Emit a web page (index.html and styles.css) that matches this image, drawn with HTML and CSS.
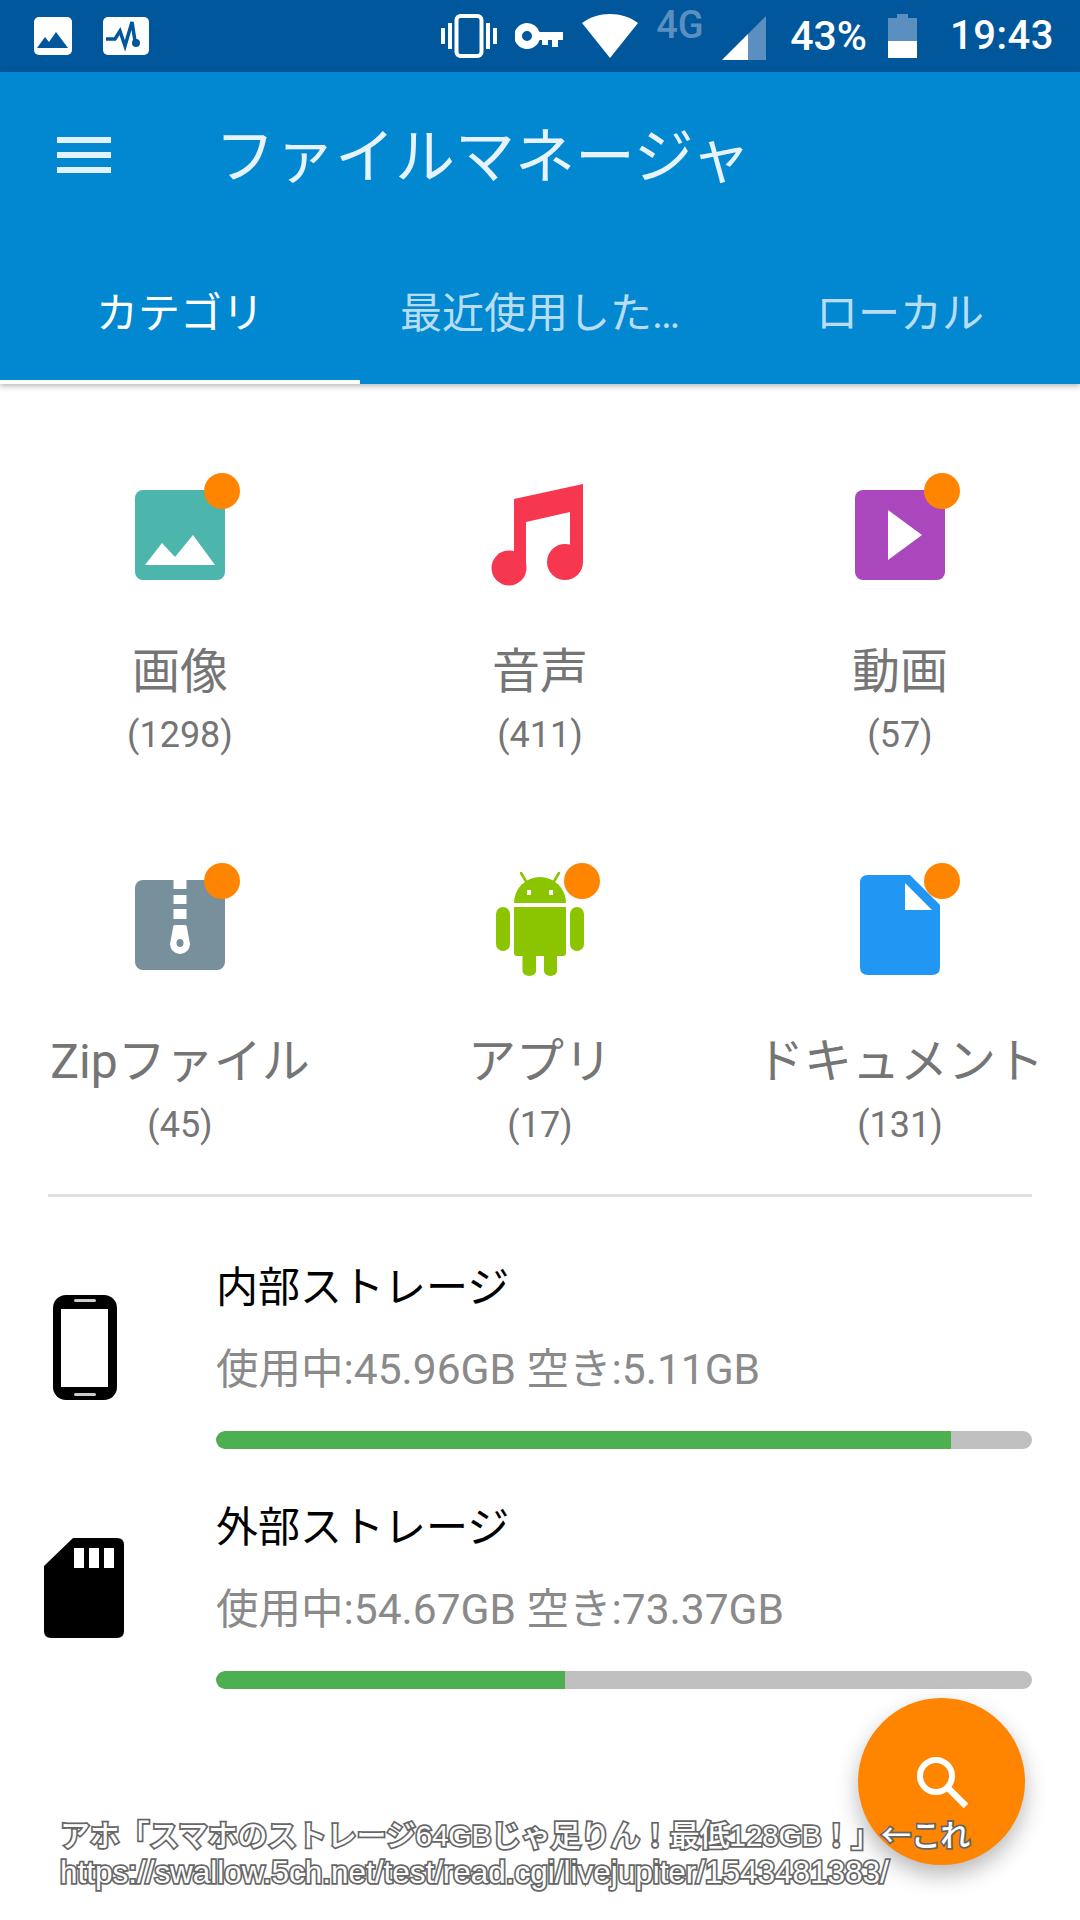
FILE: index.html
```html
<!DOCTYPE html>
<html lang="ja">
<head>
<meta charset="utf-8">
<title>ファイルマネージャ</title>
<link rel="stylesheet" href="styles.css">
</head>
<body>
<div class="phone">
  <div class="status">
    <svg class="st-a" width="38" height="38" viewBox="0 0 38 38"><rect width="38" height="38" rx="5" fill="#fff"/><path d="M3 31L11 20L15 25L22 15L34 31Z" fill="#01579b"/></svg>
    <svg class="st-b" width="46" height="38" viewBox="0 0 46 38"><rect width="46" height="38" rx="5" fill="#fff"/><path d="M3 22H12L17 14L22 29L29 5L32 24" fill="none" stroke="#01579b" stroke-width="3.5"/><circle cx="33" cy="26" r="4" fill="#01579b"/></svg>
    <span class="st-spacer"></span>
    <svg class="st-icon" width="56" height="44" viewBox="0 0 56 44"><rect x="15.5" y="2" width="25" height="40" rx="4" fill="none" stroke="#fff" stroke-width="4"/><path d="M0 14H4V30H0ZM7 9H11V35H7ZM45 9H49V35H45ZM52 14H56V30H52Z" fill="#fff"/></svg>
    <svg class="st-key" width="48" height="26" viewBox="0 0 48 26"><path d="M12 0a13 13 0 0 1 12.500 9H48V17H43V24H37V17H33V22H27V17H24.500A13 13 0 1 1 12 0ZM12 8a5 5 0 1 0 0 10a5 5 0 0 0 0-10Z" fill="#fff" fill-rule="evenodd"/></svg>
    <svg class="st-wifi" width="56" height="44" viewBox="0 0 56 44"><path d="M28 44L0 9C16-3 40-3 56 9Z" fill="#fff"/></svg>
    <span class="st-4g">4G</span>
    <svg class="st-signal" width="44" height="44" viewBox="0 0 44 44"><path d="M0 44L44 0V44Z" fill="#5b8fc0"/><path d="M0 44L26 18V44Z" fill="#fff"/></svg>
    <span class="st-pct">43%</span>
    <svg class="st-batt" width="29" height="44" viewBox="0 0 29 44"><path d="M9 0H20V4H29V27H0V4H9Z" fill="#5b8fc0"/><rect y="27" width="29" height="17" fill="#fff"/></svg>
    <span class="st-time">19:43</span>
  </div>

  <header class="appbar">
    <div class="toolbar">
      <svg class="menu" width="54" height="36" viewBox="0 0 54 36"><path d="M0 0H54V6H0ZM0 15H54V21H0ZM0 30H54V36H0Z" fill="#e3f2fd"/></svg>
      <h1 class="title">ファイルマネージャ</h1>
    </div>
    <nav class="tabs">
      <div class="tab tab-on">カテゴリ</div>
      <div class="tab">最近使用した…</div>
      <div class="tab">ローカル</div>
    </nav>
  </header>

  <section class="grid">
    <div class="cell">
      <div class="tile">
        <svg width="120" height="120" viewBox="0 0 120 120"><rect x="15" y="15" width="90" height="90" rx="8" fill="#4db6ac"/><path d="M25 90L42 68L55 82L73 60L95 90Z" fill="#fff"/></svg>
        <span class="dot"></span>
      </div>
      <div class="label">画像</div>
      <div class="count">(1298)</div>
    </div>
    <div class="cell">
      <div class="tile">
        <svg width="120" height="120" viewBox="0 0 120 120"><g fill="#f73650"><path d="M34 24L103 9V87H90V37L46 47V93H34Z"/><circle cx="29" cy="93" r="17.500"/><circle cx="85" cy="87" r="18"/></g></svg>
      </div>
      <div class="label">音声</div>
      <div class="count">(411)</div>
    </div>
    <div class="cell">
      <div class="tile">
        <svg width="120" height="120" viewBox="0 0 120 120"><rect x="15" y="15" width="90" height="90" rx="8" fill="#ab47bc"/><path d="M48 35L82 60L48 85Z" fill="#fff"/></svg>
        <span class="dot"></span>
      </div>
      <div class="label">動画</div>
      <div class="count">(57)</div>
    </div>
    <div class="cell">
      <div class="tile">
        <svg width="120" height="120" viewBox="0 0 120 120"><rect x="15" y="15" width="90" height="90" rx="8" fill="#78909c"/><path d="M53.500 15H66.500V24H53.500ZM53.500 30H66.500V39H53.500ZM53.500 44H66.500V54H53.500Z" fill="#fff"/><path d="M55 60H65Q67 60 67 63L70 79A10 10 0 0 1 50 79L53 63Q53 60 55 60Z" fill="#fff"/><ellipse cx="60" cy="78" rx="3.500" ry="4" fill="#78909c"/></svg>
        <span class="dot"></span>
      </div>
      <div class="label">Zipファイル</div>
      <div class="count">(45)</div>
    </div>
    <div class="cell">
      <div class="tile">
        <svg width="120" height="120" viewBox="0 0 120 120"><g fill="#8bc400"><path d="M34 38A26 26 0 0 1 86 38Z"/><path d="M34 42H86V88Q86 91 83 91H77V106A6.500 5 0 0 1 64 106V91H56V106A6.750 5 0 0 1 42.500 106V91H37Q34 91 34 88Z"/><rect x="16" y="42" width="14" height="44" rx="7"/><rect x="90" y="42" width="14" height="44" rx="7"/></g><path d="M41 8L47 18M79 8L73 18" stroke="#8bc400" stroke-width="2.500" stroke-linecap="round"/><rect x="47" y="25" width="4" height="5" fill="#fff"/><rect x="69" y="25" width="4" height="5" fill="#fff"/></svg>
        <span class="dot"></span>
      </div>
      <div class="label">アプリ</div>
      <div class="count">(17)</div>
    </div>
    <div class="cell">
      <div class="tile">
        <svg width="120" height="120" viewBox="0 0 120 120"><path d="M28 10H70L100 40V102Q100 110 92 110H28Q20 110 20 102V18Q20 10 28 10Z" fill="#2196f3"/><path d="M65 18V45H92Z" fill="#fff"/></svg>
        <span class="dot"></span>
      </div>
      <div class="label">ドキュメント</div>
      <div class="count">(131)</div>
    </div>
  </section>

  <div class="divider"></div>

  <section class="storage">
    <div class="store">
      <svg class="store-icon" width="120" height="120" viewBox="0 0 120 120"><rect x="28" y="8" width="64" height="105" rx="13" fill="#000"/><rect x="36" y="22" width="47" height="78" fill="#fff"/><rect x="49" y="12" width="22" height="3" rx="1.500" fill="#ccc"/><rect x="49" y="106" width="22" height="3" rx="1.500" fill="#ccc"/></svg>
      <div class="store-body">
        <div class="store-name">内部ストレージ</div>
        <div class="store-use">使用中:45.96GB 空き:5.11GB</div>
        <div class="bar"><div class="bar-fill" style="width:90.100%"></div></div>
      </div>
    </div>
    <div class="store">
      <svg class="store-icon" width="120" height="120" viewBox="0 0 120 120"><path d="M48 11H92Q99 11 99 18V104Q99 111 92 111H26Q19 111 19 104V39Z" fill="#000"/><path d="M49 21H59V41H49ZM64 21H74V41H64ZM79 21H89V41H79Z" fill="#fff"/></svg>
      <div class="store-body">
        <div class="store-name">外部ストレージ</div>
        <div class="store-use">使用中:54.67GB 空き:73.37GB</div>
        <div class="bar"><div class="bar-fill" style="width:42.800%"></div></div>
      </div>
    </div>
  </section>

  <button class="fab" type="button" aria-label="検索">
    <svg width="60" height="60" viewBox="0 0 60 60"><circle cx="24" cy="24" r="16" fill="none" stroke="#fff" stroke-width="6"/><path d="M35 35L54 54" stroke="#fff" stroke-width="6.500"/></svg>
  </button>

  <div class="caption">
    <div class="cap-line cap-first">アホ「スマホのストレージ64GBじゃ足りん！最低128GB！」<span class="cap-arrow">←</span>これ</div>
    <div class="cap-line cap-second">https://swallow.5ch.net/test/read.cgi/livejupiter/1543481383/</div>
  </div>
</div>
</body>
</html>
```

FILE: styles.css
```css
* { box-sizing: border-box; }
html, body { margin: 0; padding: 0; background: #fff; }
body { font-family: Roboto, "Noto Sans CJK JP", sans-serif; }
.phone { position: relative; width: 1080px; height: 1920px; overflow: hidden; background: #fff; }

.status { height: 72px; background: #01579b; display: flex; align-items: center; padding: 0 26px 0 34px; color: #fff; }
.status svg { flex: none; display: block; }
.st-b { margin-left: 31px; }
.st-spacer { flex: 1; }
.st-key { margin-left: 18px; }
.st-wifi { margin-left: 19px; }
.st-4g { margin-left: 18px; width: 54px; font-size: 38px; font-weight: 500; color: #5b8fc0; line-height: 1; align-self: flex-start; margin-top: 6px; }
.st-signal { margin-left: 12px; margin-top: 3px; }
.st-pct { margin-left: 24px; font-size: 41px; font-weight: 500; line-height: 1; }
.st-batt { margin-left: 21px; }
.st-time { margin-left: 33px; font-size: 40px; font-weight: 500; line-height: 1; letter-spacing: .5px; }

.appbar { position: relative; z-index: 2; height: 312px; background: #0288d1; box-shadow: 0 2px 6px rgba(0,0,0,.3); color: #fff; }
.toolbar { height: 168px; display: flex; align-items: center; padding: 4px 0 0 57px; }
.menu { flex: none; margin-top: -6px; }
.title { margin: 0 0 0 104px; font-size: 60px; font-weight: 400; line-height: 1; color: rgba(255,255,255,.9); }
.tabs { height: 144px; display: flex; }
.tab { flex: 0 0 360px; height: 144px; display: flex; align-items: center; justify-content: center; padding-bottom: 5px; font-size: 42px; color: rgba(255,255,255,.72); }
.tab-on { color: #fff; box-shadow: inset 0 -4px 0 #fff; }

.grid { display: grid; grid-template-columns: repeat(3, 360px); grid-auto-rows: 390px; padding-top: 91px; height: 871px; }
.cell { display: flex; flex-direction: column; align-items: center; }
.tile { position: relative; width: 120px; height: 120px; }
.tile svg { display: block; }
.dot { position: absolute; left: 84px; top: -2px; width: 36px; height: 36px; border-radius: 50%; background: #ff8500; }
.label { margin-top: 49px; font-size: 48px; line-height: 56px; color: #757575; white-space: nowrap; }
.count { margin-top: 13px; font-size: 36px; line-height: 44px; color: #757575; }

.divider { height: 3px; margin: -61px 48px 0; background: #e0e0e0; }

.storage { padding-top: 36px; }
.store { height: 240px; display: flex; align-items: center; padding-right: 48px; }
.store-icon { flex: none; margin: -12px 71px 0 25px; }
.store-body { flex: 1; padding-top: 1px; }
.store-name { font-size: 42px; line-height: 60px; color: #000; }
.store-use { margin-top: 22px; font-size: 42.5px; line-height: 60px; color: #8a8a8a; }
.bar { margin-top: 31px; height: 18px; border-radius: 9px; background: #c0c0c0; overflow: hidden; }
.bar-fill { height: 100%; background: #4caf50; border-radius: 9px 0 0 9px; }

.fab { position: absolute; left: 858px; top: 1698px; width: 167px; height: 167px; border: 0; padding: 0; border-radius: 50%; background: #ff8500; box-shadow: 0 10px 22px rgba(0,0,0,.28); display: flex; align-items: center; justify-content: center; }
.caption { position: absolute; left: 60px; top: 1815px; font-family: "Liberation Sans", "Noto Sans CJK JP", sans-serif; font-size: 30px; font-weight: 500; color: #fff; white-space: nowrap; }
.cap-line { line-height: 36px; -webkit-text-stroke: 3.5px #666; paint-order: stroke fill; }
.cap-first { letter-spacing: -.25px; }
.cap-second { font-size: 31.5px; letter-spacing: -.02px; }
.cap-arrow { font-family: "Noto Sans CJK JP", sans-serif; }
```
